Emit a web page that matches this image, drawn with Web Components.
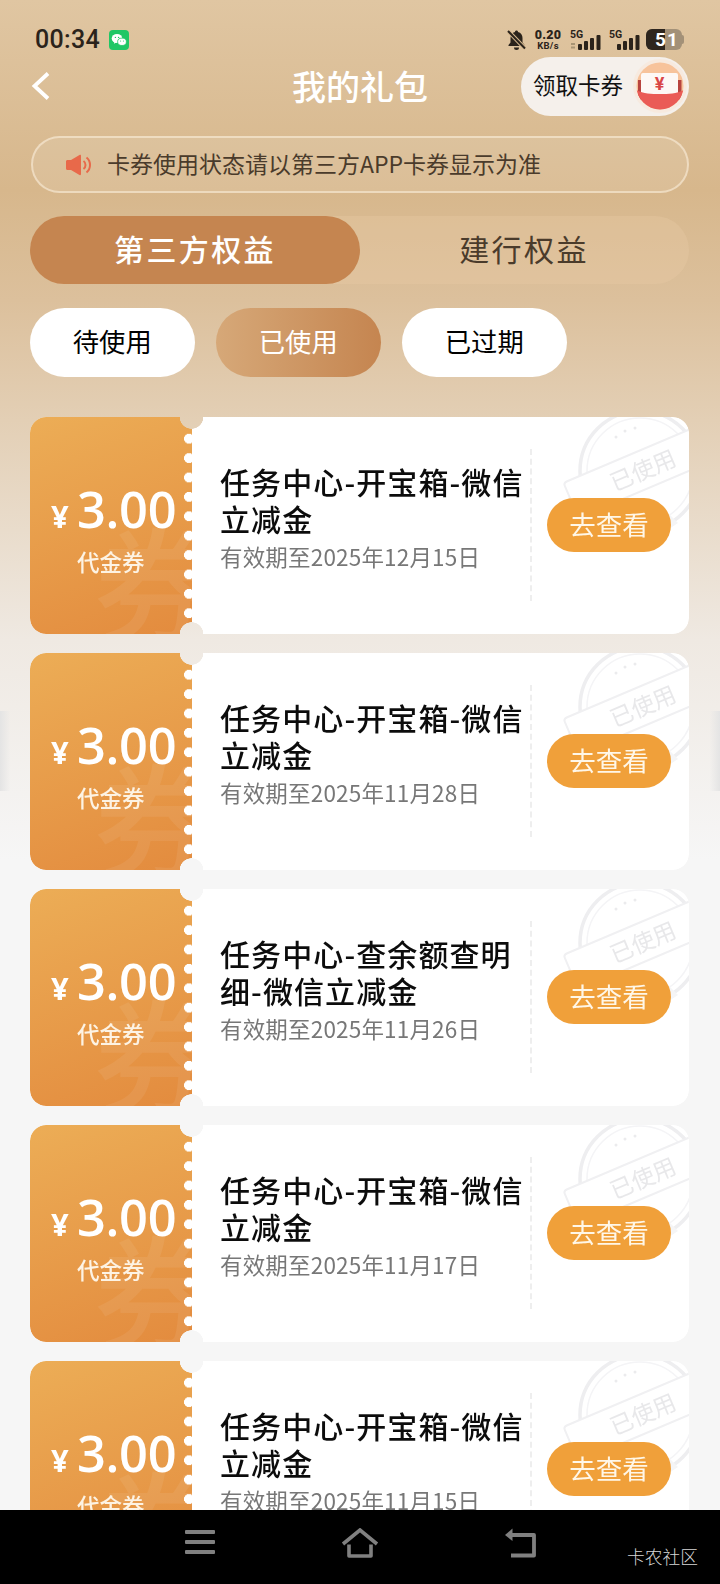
<!DOCTYPE html>
<html lang="zh">
<head>
<meta charset="utf-8">
<title>我的礼包</title>
<style>
html,body{margin:0;padding:0;background:#f6f6f6}
body{font-family:"Noto Sans CJK SC","Noto Sans",sans-serif}
</style>
</head>
<body>
<app-screen>
  <status-bar slot="top"></status-bar>
  <nav-header slot="top" heading="我的礼包"></nav-header>
  <notice-bar slot="top">卡券使用状态请以第三方APP卡券显示为准</notice-bar>
  <tab-switch slot="top"></tab-switch>
  <filter-chips slot="top"></filter-chips>
  <coupon-card><span>任务中心-开宝箱-微信立减金</span><span slot="date">有效期至2025年12月15日</span></coupon-card>
  <coupon-card><span>任务中心-开宝箱-微信立减金</span><span slot="date">有效期至2025年11月28日</span></coupon-card>
  <coupon-card><span>任务中心-查余额查明细-微信立减金</span><span slot="date">有效期至2025年11月26日</span></coupon-card>
  <coupon-card><span>任务中心-开宝箱-微信立减金</span><span slot="date">有效期至2025年11月17日</span></coupon-card>
  <coupon-card><span>任务中心-开宝箱-微信立减金</span><span slot="date">有效期至2025年11月15日</span></coupon-card>
  <bottom-nav slot="bottom"></bottom-nav>
</app-screen>
<script>
const CJK='"Noto Sans CJK SC","Noto Sans",sans-serif';
function def(name,html){
  customElements.define(name,class extends HTMLElement{
    connectedCallback(){
      if(this.shadowRoot)return;
      const r=this.attachShadow({mode:'open'});
      r.innerHTML=typeof html==='function'?html(this):html;
    }
  });
}
def('app-screen',`<style>
:host{display:flex;flex-direction:column;position:relative;width:720px;height:1584px;overflow:hidden;
 background:linear-gradient(180deg,#e0c6a2 0,#d7b78c 190px,#dcc09c 300px,#e3cfb5 420px,#efe9e2 640px,#f6f6f6 860px);
 font-family:${CJK}}
.list{flex:1;min-height:0;overflow:hidden;display:flex;flex-direction:column;gap:19px;padding:40px 31px 0 30px}
.edge{position:absolute;top:711px;height:80px;width:10px}
.l{left:0;background:linear-gradient(90deg,#e4e4e4,rgba(236,236,236,.1))}
.r{right:0;background:linear-gradient(270deg,#e4e4e4,rgba(236,236,236,.1))}
</style>
<slot name="top"></slot>
<div class="list"><slot></slot></div>
<slot name="bottom"></slot>
<div class="edge l"></div><div class="edge r"></div>`);

def('status-bar',`<style>
:host{display:flex;align-items:center;height:56px;padding:24px 36px 0 35px;box-sizing:border-box;color:#2b231b;flex:none}
.time{font:500 25px/32px Roboto,sans-serif;letter-spacing:.3px;width:74px}
.wx{width:20px;height:20px;margin-top:-1px}
.sp{flex:1}
.right{display:flex;align-items:center;margin-top:-1px}
.net{display:flex;flex-direction:column;align-items:center;width:26px;margin-left:8px;font-family:Roboto,sans-serif;font-weight:700;color:#2b231b}
.net b{font-size:12.5px;line-height:11px;letter-spacing:.3px}
.net i{font-style:normal;font-size:9.5px;line-height:11px;letter-spacing:.3px}
.sig{display:block;margin-left:9px}
.batt{display:flex;margin-left:6px;position:relative;width:36px;height:21px;border-radius:6px;overflow:hidden;background:#a39178;
 font:700 19px/21px Roboto,sans-serif;color:#fff}
.batt .fill{position:absolute;left:0;top:0;bottom:0;width:19px;background:#2e261e}
.batt span{position:relative;padding-left:9px;letter-spacing:1px}
.nub{width:2px;height:9px;border-radius:0 2px 2px 0;background:#a39178}
</style>
<div class="time">00:34</div>
<svg class="wx" viewBox="0 0 20 20"><rect width="20" height="20" rx="4" fill="#1fc765"/><ellipse cx="8" cy="8.500" rx="5.300" ry="4.500" fill="#fff"/><path d="M5.500 11.500l-.6 2.200 2.400-1.200z" fill="#fff"/><ellipse cx="13" cy="11.800" rx="4.400" ry="3.700" fill="#fff" stroke="#1fc765" stroke-width=".8"/><circle cx="6.400" cy="7.400" r=".7" fill="#1fc765"/><circle cx="9.600" cy="7.400" r=".7" fill="#1fc765"/><circle cx="11.600" cy="11" r=".55" fill="#1fc765"/><circle cx="14.400" cy="11" r=".55" fill="#1fc765"/></svg>
<div class="sp"></div>
<div class="right">
<svg width="21" height="22" viewBox="0 0 21 22"><path d="M10.500 1.500c-.9 0-1.500.6-1.500 1.400C6 3.700 4.500 6 4.500 9v4.500L2.500 16v1h16v-1l-2-2.500V9c0-3-1.500-5.300-4.500-6.100 0-.8-.6-1.400-1.500-1.400z" fill="#2b231b"/><path d="M8 18.500h5a2.500 2.500 0 0 1-5 0z" fill="#2b231b"/><path d="M2.500 2.500l16 16.500" stroke="#d9bb91" stroke-width="4"/><path d="M2 2l17 17.500" stroke="#2b231b" stroke-width="2"/></svg>
<div class="net"><b>0.20</b><i>KB/s</i></div>
<svg class="sig" width="32" height="22" viewBox="0 0 32 22"><text x="0" y="9" font-family="Roboto,sans-serif" font-weight="700" font-size="10.500" fill="#2b231b">5G</text><rect x="1" y="14" width="4" height="2" fill="#a79474"/><rect x="1" y="17.500" width="4" height="2" fill="#a79474"/><rect x="8" y="15" width="4" height="6" rx="1" fill="#2b231b"/><rect x="14" y="12" width="4" height="9" rx="1" fill="#2b231b"/><rect x="20" y="9" width="4" height="12" rx="1" fill="#2b231b"/><rect x="26.500" y="6" width="4" height="15" rx="1" fill="#2b231b"/></svg>
<svg class="sig" style="margin-left:7px" width="31" height="22" viewBox="0 0 31 22"><text x="0" y="9" font-family="Roboto,sans-serif" font-weight="700" font-size="10.500" fill="#2b231b">5G</text><rect x="8" y="15" width="4" height="6" rx="1" fill="#2b231b"/><rect x="14" y="12" width="4" height="9" rx="1" fill="#2b231b"/><rect x="20" y="9" width="4" height="12" rx="1" fill="#2b231b"/><rect x="26.500" y="6" width="4" height="15" rx="1" fill="#2b231b"/></svg>
<div class="batt"><div class="fill"></div><span>51</span></div><div class="nub"></div>
</div>`);

def('nav-header',el=>`<style>
:host{display:flex;align-items:center;position:relative;height:60px;padding:0 31px 0 31px;flex:none}
.back{width:20px;height:30px;display:block}
.title{position:absolute;left:0;right:0;top:10px;text-align:center;color:#fff;font:500 34px/40px ${CJK};pointer-events:none}
.pill{margin-left:auto;display:flex;align-items:center;height:59px;width:168px;box-sizing:border-box;padding-left:12px;border-radius:30px;background:#f5f0eb;
 color:#111;font:400 22.500px/30px ${CJK}}
.pill span{white-space:nowrap;margin-top:-4px}
.pill svg{margin-left:auto;margin-right:1px;display:block}
</style>
<svg class="back" viewBox="0 0 20 30"><path d="M17 2.500L3.500 15 17 27.500" fill="none" stroke="#fff" stroke-width="3.800"/></svg>
<div class="title">${el.getAttribute('heading')}</div>
<div class="pill"><span>领取卡券</span>
<svg width="56" height="56" viewBox="0 0 56 56"><defs><clipPath id="c"><circle cx="28" cy="28" r="23.500"/></clipPath></defs>
<circle cx="28" cy="28" r="27" fill="#f7eadf"/>
<g clip-path="url(#c)"><rect width="56" height="56" fill="#f7c39b"/>
<rect x="6" y="22" width="3.500" height="20" fill="#b8443f"/><rect x="46" y="22" width="3.500" height="20" fill="#b8443f"/>
<rect x="9" y="15" width="37" height="24" rx="2" fill="#fdf8f5"/>
<path d="M4 32c8 4 15 4 24 4s16 0 24-4v24H4z" fill="#ea5b56"/></g>
<text x="27.500" y="32" text-anchor="middle" font-family="Roboto,sans-serif" font-weight="700" font-size="18" fill="#d94646">¥</text></svg></div>`);

def('notice-bar',`<style>
:host{display:flex;align-items:center;height:57px;box-sizing:border-box;margin:20px 31px 0 31px;border:2px solid rgba(255,245,230,.5);border-radius:29px;
 background:rgba(255,255,255,.1);padding-left:33px;color:#4a3b2b;font:400 23px/30px ${CJK};flex:none}
svg{margin-right:16px;display:block;flex:none}
span{white-space:nowrap;margin-top:-3px}
</style>
<svg width="25" height="22" viewBox="0 0 25 22"><path d="M0 7.500c0-.8.600-1.500 1.500-1.500H5L13.500 1c1-.5 1.500 0 1.500 1v18c0 1-.5 1.500-1.500 1L5 16H1.500C.6 16 0 15.300 0 14.500z" fill="#e8694a"/><path d="M17.500 7c1.500 1 2 2.500 2 4s-.5 3-2 4" fill="none" stroke="#e8694a" stroke-width="2"/><path d="M20.500 3.500c2.500 2 3.500 4.700 3.500 7.500s-1 5.500-3.500 7.500" fill="none" stroke="#e8694a" stroke-width="2"/></svg>
<span><slot></slot></span>`);

def('tab-switch',`<style>
:host{display:flex;height:68px;margin:23px 31px 0 30px;border-radius:34px;background:rgba(235,205,170,.3);flex:none;font:400 30px/64px ${CJK};letter-spacing:2.400px;text-align:center}
div{flex:1;white-space:nowrap}
.on{flex:none;width:330px;border-radius:34px;background:#c58550;color:#fff;font-weight:500}
.off{color:#4a3b2b;padding-right:1px}
</style><div class="on">第三方权益</div><div class="off">建行权益</div>`);

def('filter-chips',`<style>
:host{display:flex;gap:21.500px;margin:24px 30px 0;flex:none;font:400 26.300px/65px ${CJK};text-align:center}
div{width:164.500px;height:69px;border-radius:35px;background:#fff;color:#000}
.on{background:linear-gradient(90deg,#d6a878,#c58550);color:#fff}
</style><div>待使用</div><div class="on">已使用</div><div>已过期</div>`);

def('coupon-card',`<style>
:host{display:flex;position:relative;height:217px;width:659px;flex:none;border-radius:16px;overflow:hidden;background:#fff;
 -webkit-mask-image:radial-gradient(circle at 161.500px 0,transparent 11.500px,#000 12px),radial-gradient(circle at 161.500px 100%,transparent 11.500px,#000 12px);
 -webkit-mask-composite:source-in;mask-image:radial-gradient(circle at 161.500px 0,transparent 11.500px,#000 12px),radial-gradient(circle at 161.500px 100%,transparent 11.500px,#000 12px);mask-composite:intersect}
.left{position:relative;flex:none;width:162px;overflow:hidden;color:#fff;background:linear-gradient(160deg,#ecad56,#e38b3e);box-sizing:border-box;padding:65px 0 0 21px}
.left::after{content:"";position:absolute;right:0;top:12px;width:8px;height:194px;background:radial-gradient(circle at 5px 9.700px,#fff 4.700px,transparent 5.200px) 0 0/8px 19.400px repeat-y}
.wm{position:absolute;left:64px;top:100px;font:500 124px/124px ${CJK};color:rgba(255,255,255,.07);white-space:nowrap}
.amt{position:relative;display:flex;align-items:baseline;height:54px;white-space:nowrap}
.cur{font:700 31px/54px "Open Sans",sans-serif;width:26px}
.num{font:600 50.500px/54px "Open Sans",sans-serif;letter-spacing:-.3px}
.lab{position:relative;margin:10px 0 0 26px;font:500 22.500px/30px ${CJK};color:#fdf3e4;white-space:nowrap}
.body{position:relative;flex:1;min-width:0;padding:46px 0 0 28px;box-sizing:border-box}
.t{position:relative;width:310px;color:#0c0c0c;font:500 30px/37px ${CJK};letter-spacing:1.100px}
.d{position:relative;margin-top:3px;color:#777;font:400 22.500px/32px ${CJK};letter-spacing:.18px;white-space:nowrap}
.div{position:absolute;left:338px;top:32px;height:152px;border-left:2px dashed #eeeeee}
.btn{position:absolute;left:355px;top:81px;width:124px;height:54px;border-radius:27px;background:#f0a03a;color:#fff7e8;font:400 26.500px/51px ${CJK};text-align:center}
.stamp{position:absolute;left:340px;top:0;display:block}
</style>
<div class="left"><div class="wm">券</div>
<div class="amt"><span class="cur">¥</span><span class="num">3.00</span></div>
<div class="lab">代金券</div></div>
<div class="body">
<svg class="stamp" width="157" height="217" viewBox="0 0 157 217">
<circle cx="108" cy="54" r="60" fill="none" stroke="#eeeef0" stroke-width="3.500"/>
<circle cx="108" cy="54" r="53" fill="none" stroke="#f4f4f6" stroke-width="1.500"/>
<g fill="#ebebed"><circle cx="84" cy="20" r="1.500"/><circle cx="93" cy="14" r="1.500"/><circle cx="103" cy="11" r="1.500"/></g>
<g transform="rotate(-23 108 54)">
<path d="M37 35H210V73H37c-2 0-4-1-4-3V38c0-2 2-3 4-3z" fill="#fff" stroke="#f0f0f2" stroke-width="2"/>
<text x="111" y="63" text-anchor="middle" font-family="Noto Sans CJK SC,sans-serif" font-size="23" fill="#e8e8ea">已使用</text>
</g>
<path d="M108 112l30-14 8 8-24 16z" fill="#f5f5f6"/>
</svg>
<div class="t"><slot></slot></div>
<div class="d"><slot name="date"></slot></div>
<div class="div"></div>
<div class="btn">去查看</div>
</div>`);

def('bottom-nav',`<style>
:host{display:block;position:relative;height:74px;background:#000;flex:none}
.icons{display:flex;height:100%;align-items:flex-start;padding:18px 0 0 185px;box-sizing:border-box}
svg{display:block}
.mark{position:absolute;left:627px;top:35px;color:#d6d6d6;font:300 17.800px/22px ${CJK};white-space:nowrap}
</style>
<div class="icons">
<svg width="30" height="26" viewBox="0 0 30 26"><g fill="#808080"><rect y="2" width="30" height="4" rx="1"/><rect y="12" width="30" height="4" rx="1"/><rect y="22" width="30" height="4" rx="1"/></g></svg>
<svg style="margin-left:126px" width="38" height="30" viewBox="0 0 38 30"><path d="M2 16L19 2l17 14" fill="none" stroke="#808080" stroke-width="3.600"/><path d="M8 16.500V28h22V16.500" fill="none" stroke="#808080" stroke-width="3.600" stroke-linejoin="round"/></svg>
<svg style="margin-left:125px" width="33" height="30" viewBox="0 0 33 30"><path d="M1 7L8.500 .5v12.500z" fill="#808080"/><path d="M7 7h23v20.500H7" fill="none" stroke="#808080" stroke-width="3.800" stroke-linejoin="round"/></svg>
</div>
<div class="mark">卡农社区</div>`);
</script>
</body>
</html>
